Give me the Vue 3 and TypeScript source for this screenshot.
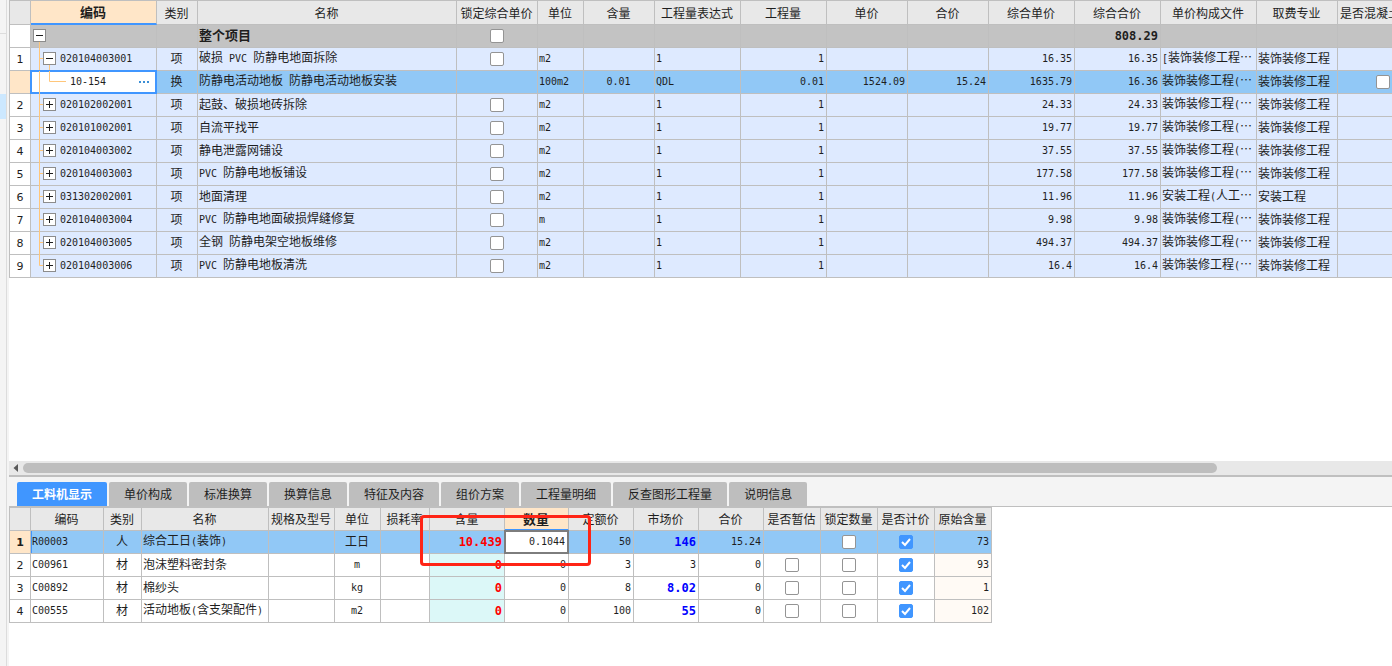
<script setup lang="ts">
import { defineComponent, h, ref } from 'vue'

// Splits a string into CJK and half-width runs so that each run gets its own font size.
const Txt = defineComponent({
  props: { v: { type: String, default: '' } },
  setup(props) {
    return () =>
      (props.v.match(/[\x20-\x7e]+|[^\x20-\x7e]+/g) ?? []).map((run) =>
        h('span', { class: /^[\x20-\x7e]+$/.test(run) ? 'half' : 'full' }, run),
      )
  },
})

interface Item {
  no: string
  code: string
  kind: string
  name: string
  unit: string
  amount: string
  expr: string
  qty: string
  price: string
  total: string
  unitSum: string
  sum: string
  file: string
  major: string
  level: 'root' | 'open' | 'child' | 'closed' | 'last'
}

const file = '装饰装修工程(…'
const deco = '装饰装修工程'

function line(no: string, code: string, name: string, unit: string, unitSum: string, extra: Partial<Item> = {}): Item {
  return {
    no, code, name, unit, unitSum, sum: unitSum, kind: '项', amount: '', expr: '1', qty: '1',
    price: '', total: '', file, major: deco, level: 'closed', ...extra,
  }
}

const items: Item[] = [
  line('', '', '整个项目', '', '', { kind: '', expr: '', qty: '', sum: '808.29', file: '', major: '', level: 'root' }),
  line('1', '020104003001', '破损 PVC 防静电地面拆除', 'm2', '16.35', { file: '[装饰装修工程…', level: 'open' }),
  line('', '10-154', '防静电活动地板 防静电活动地板安装', '100m2', '1635.79', {
    kind: '换', amount: '0.01', expr: 'QDL', qty: '0.01', price: '1524.09', total: '15.24', sum: '16.36', level: 'child',
  }),
  line('2', '020102002001', '起鼓、破损地砖拆除', 'm2', '24.33'),
  line('3', '020101002001', '自流平找平', 'm2', '19.77'),
  line('4', '020104003002', '静电泄露网铺设', 'm2', '37.55'),
  line('5', '020104003003', 'PVC 防静电地板铺设', 'm2', '177.58'),
  line('6', '031302002001', '地面清理', 'm2', '11.96', { file: '安装工程(人工…', major: '安装工程' }),
  line('7', '020104003004', 'PVC 防静电地面破损焊缝修复', 'm', '9.98'),
  line('8', '020104003005', '全钢 防静电架空地板维修', 'm2', '494.37'),
  line('9', '020104003006', 'PVC 防静电地板清洗', 'm2', '16.4', { level: 'last' }),
]

const topCols = [21, 126, 41, 259, 81, 46, 71, 86, 86, 81, 81, 86, 86, 96, 81, 91]
const topHeads = ['类别', '名称', '锁定综合单价', '单位', '含量', '工程量表达式', '工程量', '单价', '合价', '综合单价', '综合合价', '单价构成文件', '取费专业']

const tabs = ['工料机显示', '单价构成', '标准换算', '换算信息', '特征及内容', '组价方案', '工程量明细', '反查图形工程量', '说明信息']
const active = ref('工料机显示')

const subCols = [21, 73, 38, 127, 66, 46, 49, 75, 64, 65, 65, 65, 57, 57, 57, 57]
const subHeads = ['编码', '类别', '名称', '规格及型号', '单位', '损耗率', '含量', '数量', '定额价', '市场价', '合价', '是否暂估', '锁定数量', '是否计价', '原始含量']
const quantity = ref('0.1044')

const parts = [
  { no: '1', code: 'R00003', kind: '人', name: '综合工日(装饰)', unit: '工日', content: '10.439', qty: '', fixed: '50', market: '146', total: '15.24', origin: '73' },
  { no: '2', code: 'C00961', kind: '材', name: '泡沫塑料密封条', unit: 'm', content: '0', qty: '0', fixed: '3', market: '3', total: '0', origin: '93' },
  { no: '3', code: 'C00892', kind: '材', name: '棉纱头', unit: 'kg', content: '0', qty: '0', fixed: '8', market: '8.02', total: '0', origin: '1' },
  { no: '4', code: 'C00555', kind: '材', name: '活动地板(含支架配件)', unit: 'm2', content: '0', qty: '0', fixed: '100', market: '55', total: '0', origin: '102' },
]
</script>

<template>
  <div class="app">
    <aside class="rail">
      <div class="rail-top"></div>
      <div class="rail-mark"></div>
    </aside>
    <main class="main">
      <section class="upper">
        <table class="grid">
          <colgroup><col v-for="(w, i) in topCols" :key="i" :style="{ width: w + 'px' }" /></colgroup>
          <thead>
            <tr>
              <th></th>
              <th class="current">编码</th>
              <th v-for="t in topHeads" :key="t">{{ t }}</th>
              <th class="cut">是否混凝土</th>
            </tr>
          </thead>
          <tbody>
            <tr v-for="(r, i) in items" :key="i" :class="['row', r.level]">
              <td class="no">{{ r.no }}</td>
              <td class="code">
                <div class="tree">
                  <svg v-if="r.level === 'root'" class="branch" width="30" height="23" aria-hidden="true"><path d="M8.5 17V23" /></svg>
                  <svg v-else-if="r.level === 'child'" class="branch" width="39" height="23" aria-hidden="true"><path d="M8.5 0V23M18.5 0V10.5H35" /></svg>
                  <svg v-else-if="r.level === 'last'" class="branch" width="30" height="23" aria-hidden="true"><path d="M8.5 0V10.5H12" /></svg>
                  <svg v-else class="branch" width="30" height="23" aria-hidden="true"><path :d="'M8.5 0V23M8.5 10.5H12' + (r.level === 'open' ? 'M18.5 17V23' : '')" /></svg>
                  <button v-if="r.level !== 'child'" type="button" class="toggle" :aria-label="r.level === 'root' || r.level === 'open' ? '收起' : '展开'">
                    <svg width="13" height="13" aria-hidden="true"><path :d="r.level === 'root' || r.level === 'open' ? 'M3 6.5H10' : 'M3 6.5H10M6.5 3V10'" /></svg>
                  </button>
                  <Txt :v="r.code" />
                  <button v-if="r.level === 'child'" type="button" class="more" aria-label="更多"><i></i><i></i><i></i></button>
                </div>
              </td>
              <td class="c"><Txt :v="r.kind" /></td>
              <td><Txt :v="r.name" /></td>
              <td class="c"><input v-if="r.level !== 'child'" type="checkbox" aria-label="锁定综合单价" /></td>
              <td><Txt :v="r.unit" /></td>
              <td class="c"><Txt :v="r.amount" /></td>
              <td><Txt :v="r.expr" /></td>
              <td class="r"><Txt :v="r.qty" /></td>
              <td class="r"><Txt :v="r.price" /></td>
              <td class="r"><Txt :v="r.total" /></td>
              <td class="r"><Txt :v="r.unitSum" /></td>
              <td class="r"><Txt :v="r.sum" /></td>
              <td><Txt :v="r.file" /></td>
              <td><Txt :v="r.major" /></td>
              <td class="c"><input v-if="r.level === 'child'" type="checkbox" aria-label="是否混凝土" /></td>
            </tr>
          </tbody>
        </table>
      </section>

      <div class="scroll">
        <svg width="14" height="14" aria-hidden="true"><path d="M9 3V11L4.5 7Z" /></svg>
        <div class="track"><div class="thumb"></div></div>
      </div>

      <nav class="tabs" role="tablist">
        <button v-for="t in tabs" :key="t" type="button" role="tab" :aria-selected="t === active" :class="['tab', { on: t === active }]" @click="active = t">{{ t }}</button>
      </nav>

      <section class="lower">
        <div class="frame">
          <table class="grid sub">
            <colgroup><col v-for="(w, i) in subCols" :key="i" :style="{ width: w + 'px' }" /></colgroup>
            <thead>
              <tr>
                <th></th>
                <th v-for="t in subHeads" :key="t" :class="{ current: t === '数量' }">{{ t }}</th>
              </tr>
            </thead>
            <tbody>
              <tr v-for="(p, i) in parts" :key="p.no" :class="['row', { picked: i === 0 }]">
                <td class="no">{{ p.no }}</td>
                <td class="first"><Txt :v="p.code" /></td>
                <td class="c"><Txt :v="p.kind" /></td>
                <td><Txt :v="p.name" /></td>
                <td></td>
                <td class="c"><Txt :v="p.unit" /></td>
                <td></td>
                <td class="r content"><Txt :v="p.content" /></td>
                <td :class="['r', { editing: i === 0 }]">
                  <input v-if="i === 0" v-model="quantity" type="text" class="edit" aria-label="数量" />
                  <Txt v-else :v="p.qty" />
                </td>
                <td class="r"><Txt :v="p.fixed" /></td>
                <td :class="['r', { changed: i !== 1 }]"><Txt :v="p.market" /></td>
                <td class="r"><Txt :v="p.total" /></td>
                <td class="c"><input v-if="i > 0" type="checkbox" aria-label="是否暂估" /></td>
                <td class="c"><input type="checkbox" aria-label="锁定数量" /></td>
                <td class="c"><input type="checkbox" checked aria-label="是否计价" /></td>
                <td class="r origin"><Txt :v="p.origin" /></td>
              </tr>
            </tbody>
          </table>
          <div class="highlight"></div>
        </div>
      </section>
    </main>
  </div>
</template>

<style>
body {
  margin: 0;
  background: #fff;
}
</style>

<style scoped>
.app {
  display: flex;
  min-height: 100vh;
  overflow: hidden;
  color: #1e1e1e;
  font: 12px/16px "Noto Sans CJK SC", "Liberation Sans", sans-serif;
}
button,
input {
  margin: 0;
  padding: 0;
  font: inherit;
}
.rail {
  flex: none;
  width: 6px;
  background: #f4f4f4;
  border-right: 1px solid #dcdcdc;
}
.rail-top {
  height: 33px;
  border-bottom: 1px solid #dcdcdc;
}
.rail-mark {
  height: 25px;
  margin-top: 60px;
  background: #cce8ff;
}
.main {
  flex: 1;
  min-width: 0;
  display: flex;
  flex-direction: column;
  border-left: 2px solid #f4f4f4;
}
.upper {
  flex: none;
  height: 461px;
  overflow: hidden;
}
.grid {
  width: 0;
  table-layout: fixed;
  border-collapse: separate;
  border-spacing: 0;
  border: 1px solid #bfbfbf;
  border-width: 1px 0 0 1px;
  box-sizing: border-box;
}
.grid th,
.grid td {
  position: relative;
  box-sizing: border-box;
  height: 23px;
  padding: 0 2px 2px 1px;
  border: 1px solid #bfbfbf;
  border-width: 0 1px 1px 0;
  line-height: 16px;
  text-align: left;
  vertical-align: middle;
  white-space: pre;
  overflow: hidden;
}
.grid th {
  height: 24px;
  padding: 0 1px 0 0;
  background: #e8e8e8;
  font-weight: 400;
  text-align: center;
}
.grid.sub th {
  height: 23px;
}
.grid th.current {
  background: #ffe6c8;
  border-bottom: 2px solid #4096ff;
  font-weight: 700;
  font-size: 13px;
}
.grid th.cut {
  padding-left: 2px;
  text-align: left;
}
.grid td.no {
  padding: 2px 0 0;
  background: #fff;
  font-family: "DejaVu Sans", sans-serif;
  font-size: 11px;
  text-align: center;
}
.grid td {
  background: #deeaff;
}
.grid td.c {
  padding: 0 1px 2px 0;
  text-align: center;
}
.grid :deep(.half) {
  font-family: "DejaVu Sans Mono", monospace;
  font-size: 10px;
}
.grid .root td {
  background: #c3c3c3;
  font-weight: 700;
  font-size: 13px;
}
.grid .root td.no {
  background: #fff;
}
.grid .root :deep(.half),
.grid .content :deep(.half),
.grid .changed :deep(.half) {
  font-size: 12px;
}
.grid .child td {
  background: #91c8f6;
}
.grid .child td.no {
  background: #ffe6c8;
}
.grid td.r {
  text-align: right;
}
.grid td.code {
  padding: 0;
  overflow: visible;
}
.tree {
  position: relative;
  display: flex;
  align-items: center;
  box-sizing: border-box;
  height: 22px;
  padding: 0 0 1px 12px;
}
.root .tree {
  padding-left: 2px;
}
.child .tree {
  padding-left: 39px;
  background: #fff;
  outline: 2px solid #4096ff;
  outline-offset: -1px;
}
.branch {
  position: absolute;
  top: 0;
  left: 0;
  fill: none;
  stroke: #ffc67a;
}
.toggle {
  position: relative;
  flex: none;
  box-sizing: border-box;
  width: 13px;
  height: 13px;
  margin-right: 4px;
  border: 0;
  background: #fff;
  outline: 1px solid #8c8c8c;
  outline-offset: -1px;
}
.toggle svg {
  display: block;
  fill: none;
  stroke: #1e1e1e;
}
.more {
  display: flex;
  gap: 2px;
  margin-left: auto;
  padding: 8px 7px 8px 4px;
  border: 0;
  background: none;
}
.more i {
  width: 2px;
  height: 2px;
  background: #3b8fd6;
}
input[type="checkbox"] {
  appearance: none;
  display: block;
  box-sizing: border-box;
  width: 14px;
  height: 14px;
  margin: 2px auto 0;
  border: 1px solid #949494;
  border-radius: 2px;
  background: #fff;
}
input[type="checkbox"]:checked {
  border-color: #4096ff;
  background: #4096ff url("data:image/svg+xml,%3Csvg xmlns='http://www.w3.org/2000/svg' width='12' height='12' fill='none' stroke='white' stroke-width='2'%3E%3Cpath d='M2 6l3 3 5-6'/%3E%3C/svg%3E") center no-repeat;
}
.scroll {
  flex: none;
  display: flex;
  height: 14px;
  background: #e8e8e8;
  border-bottom: 2px solid #bfbfbf;
}
.scroll svg {
  flex: none;
  fill: #5a5a5a;
}
.track {
  flex: 1;
  padding: 2px 0;
}
.thumb {
  width: 87.2%;
  height: 10px;
  border-radius: 5px;
  background: #bebebe;
}
.tabs {
  flex: none;
  display: flex;
  gap: 2px;
  padding: 5px 8px 0;
  background: #f4f4f4;
  border-bottom: 1px solid #bfbfbf;
}
.tab {
  height: 24px;
  padding: 0 15px 1px;
  border: 0;
  border-radius: 2px 2px 0 0;
  background: #bebebe;
  color: #1e1e1e;
  white-space: nowrap;
}
.tab.on {
  background: #4096ff;
  color: #fff;
  font-weight: 700;
}
.frame {
  position: relative;
  width: max-content;
}
.sub td,
.sub td.no {
  background: #fff;
}
.sub td.content {
  background: #dcf8f8;
  color: #f00;
  font-weight: 700;
}
.sub td.changed {
  color: #00f;
  font-weight: 700;
}
.sub td.origin {
  background: #fffaf5;
}
.sub .picked td {
  background: #91c8f6;
}
.sub .picked td.no {
  background: #ffe6c8;
  font-weight: 700;
}
.sub .picked td.first {
  box-shadow: inset 1px 0 0 #4096ff;
}
.sub td.editing {
  padding: 0;
  overflow: visible;
}
.edit {
  display: block;
  box-sizing: border-box;
  width: 100%;
  height: 22px;
  padding: 0 3px 2px 2px;
  border: 0;
  outline: 2px solid #7d7d7d;
  outline-offset: -1px;
  border-radius: 0;
  background: #fff;
  color: #1e1e1e;
  font: 10px/20px "DejaVu Sans Mono", monospace;
  text-align: right;
}
.highlight {
  position: absolute;
  top: 8px;
  left: 411px;
  box-sizing: border-box;
  width: 171px;
  height: 51px;
  border: 3px solid #ff2416;
  border-radius: 4px;
  pointer-events: none;
}
</style>
